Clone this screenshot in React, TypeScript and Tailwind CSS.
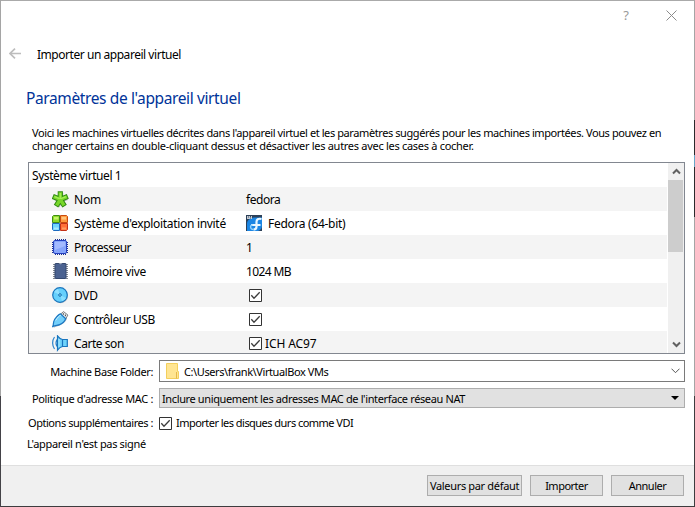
import React from 'react';

const ui = "font-['Noto_Sans','Open_Sans',sans-serif]";

function Icon({ children }: { children: React.ReactNode }) {
  return (
    <svg width="17" height="17" viewBox="0 0 17 17" className="block shrink-0" fill="none">
      {children}
    </svg>
  );
}

function NameIcon() {
  return (
    <Icon>
      <path d="M9 9.500V2M9 9.500L3 7M9 9.500L15 7M9 9.500L5.500 15M9 9.500l3.500 5.500" stroke="#b9b9b9" strokeWidth="4.500" />
      <path d="M8.300 8.500V.3M8.300 8.500L.8 5.400M8.300 8.500L15.800 5.400M8.300 8.500L4 15.200M8.300 8.500l4.300 6.700" stroke="#2f8a10" strokeWidth="5.200" />
      <path d="M8.300 8.500V1.300M8.300 8.500L1.700 5.800M8.300 8.500L14.900 5.800M8.300 8.500L4.600 14.300M8.300 8.500l3.700 5.800" stroke="#78d62a" strokeWidth="3.400" />
      <path d="M8.300 8V2M7.500 7.700L2.500 5.700M9 7.700l5-2" stroke="#a4ee55" strokeWidth="1.300" />
    </Icon>
  );
}

function SystemIcon() {
  return (
    <Icon>
      <path d="M1.500.5h6v7h-7v-6z" fill="#8fdc2a" stroke="#408e12" />
      <path d="M8.500.5h6l1 1v6h-7z" fill="#ff9a40" stroke="#c84b0e" />
      <path d="M.5 8.500h7v7h-6l-1-1z" fill="#6fd6ff" stroke="#1c6bc0" />
      <path d="M8.500 8.500h7v6l-1 1h-6z" fill="#ff7038" stroke="#c43116" />
      <path d="M2 2h4.500v2.500H2z" fill="#c6f56c" />
      <path d="M9.500 2H14v2.500H9.500z" fill="#ffc47b" />
      <path d="M2 12.500h4.500v2H2z" fill="#a9eaff" />
      <path d="M10 12.500h4v2h-4z" fill="#ff9c60" />
    </Icon>
  );
}

function CpuIcon() {
  return (
    <Icon>
      <path d="M3 .8h11M3 15.200h11" stroke="#1c2f8f" strokeWidth="1.600" strokeDasharray="1 1" />
      <path d="M.8 3v11M15.200 3v11" stroke="#1c2f8f" strokeWidth="1.600" strokeDasharray="1 1" />
      <rect x="1.500" y="1.500" width="13" height="13" rx="1.500" fill="#86a5fb" stroke="#2541bf" />
      <path d="M3 3h10v4L3 11z" fill="#a3baff" />
    </Icon>
  );
}

function MemoryIcon() {
  return (
    <Icon>
      <path d="M2 1v15M15 1v15" stroke="#84888f" strokeWidth="2" strokeDasharray="1 1" />
      <rect x="3" y=".5" width="11" height="15" rx=".5" fill="#4b6290" stroke="#34486f" />
      <path d="M6.500 0h4l-2 1.500z" fill="#a4adbf" />
    </Icon>
  );
}

function DiscIcon() {
  return (
    <Icon>
      <circle cx="8.700" cy="8.900" r="7.300" fill="#b8bcc0" />
      <circle cx="8" cy="8" r="7.300" fill="#66d0fc" stroke="#1975bd" strokeWidth="1.200" />
      <path d="M8 8L2.200 5A6.500 6.500 0 0 1 6 2z" fill="#8fe0ff" />
      <path d="M8 8l6 3a6.500 6.500 0 0 1-4 3z" fill="#8adfff" />
      <circle cx="8" cy="8" r="1.300" fill="#8ee2ff" stroke="#176cae" />
    </Icon>
  );
}

function UsbIcon() {
  return (
    <Icon>
      <path d="M1.500 16.300c3-2 6-1.500 9-4 2-1.500 3.500-3 4-5" stroke="#bbbfc3" strokeWidth="1.200" />
      <path d="M8.500 3.200L11.500.6 15.900 4l-2.200 4z" fill="#ececec" stroke="#7d8185" />
      <path d="M11.300 2.200v1.600M13.400 3.600v1.600" stroke="#444" />
      <path d="M.8 15.400c1-1.800 0-4 1.700-6.700C4.500 6 6 3.500 8.500 2.800l5.200 4.900c-1 2.700-3.600 4.900-6 5.900-2 .8-4.700.7-6.900 1.800z" fill="#73cffa" stroke="#1c78c2" strokeWidth="1.200" />
      <path d="M3.700 9.500C5.500 6.500 7 4.700 8.700 4.300" stroke="#c2efff" />
    </Icon>
  );
}

function SoundIcon() {
  return (
    <Icon>
      <path d="M2.500 2C0 5.500 0 10.500 2.500 14M5 4.500c-1.300 2.300-1.300 4.700 0 7" stroke="#2b83cb" strokeWidth="1.200" />
      <path d="M5.500.8c1.500 2 2.500 3.200 5 3.700h4.800v7h-4.800c-2.500.5-3.500 1.700-5 3.700z" fill="#6ed3fb" stroke="#1874bd" strokeWidth="1.200" />
      <path d="M10.500 4.500v7" stroke="#1874bd" strokeWidth="1.200" />
      <path d="M7 4v8" stroke="#b2ecff" />
    </Icon>
  );
}

function FedoraIcon() {
  return (
    <Icon>
      <path d="M0 0h16v16H0z" fill="#2c4058" />
      <path d="M1 15V8.500C1 5 5 2.500 9 2.500h7V10c0 4-2 6-6 6H1z" fill="#1b86e4" />
      <path d="M1 1h5v3H1z" fill="#c6ccd4" />
      <path d="M2 2h1M4 3h1M4 1.500h1" stroke="#35465c" />
      <path d="M15.500 4C12 3.200 10.500 4.500 10.500 7v4.500c0 2-1 3-3 3M5 10h9.500" stroke="#e8f7ff" strokeWidth="2.200" />
      <path d="M7.500 14.500c-3.500 0-4-4.500-1-4.500" stroke="#8fd3ff" strokeWidth="1.400" />
    </Icon>
  );
}

function Check() {
  return (
    <svg width="13" height="13" viewBox="0 0 13 13" className="block shrink-0" fill="none">
      <path d="M.5.5h12v12H.5z" fill="#fff" stroke="#333" />
      <path d="M2.300 6.300L5 9.200l5.700-5.900" stroke="#3c3c3c" strokeWidth="1.300" />
    </svg>
  );
}

const rows: { icon: React.ReactNode; label: React.ReactNode; value: React.ReactNode }[] = [
  {
    icon: <NameIcon />,
    label: <span className="tracking-[-0.2px]">Nom</span>,
    value: <span className="mt-[2px] tracking-[-0.45px]">fedora</span>,
  },
  {
    icon: <SystemIcon />,
    label: <span className="tracking-[-0.31px]">Système d'exploitation invité</span>,
    value: (
      <>
        <FedoraIcon />
        <span className="mt-[2px] ml-[5px] tracking-[-0.3px]">Fedora (64-bit)</span>
      </>
    ),
  },
  {
    icon: <CpuIcon />,
    label: <span className="tracking-[-0.55px]">Processeur</span>,
    value: <span className="mt-[2px]">1</span>,
  },
  {
    icon: <MemoryIcon />,
    label: <span className="tracking-[-0.33px]">Mémoire vive</span>,
    value: <span className="mt-[2px] tracking-[-0.6px]">1024 MB</span>,
  },
  {
    icon: <DiscIcon />,
    label: <span className="tracking-[-0.3px]">DVD</span>,
    value: <div className="ml-[3px]"><Check /></div>,
  },
  {
    icon: <UsbIcon />,
    label: <span className="tracking-[-0.45px]">Contrôleur USB</span>,
    value: <div className="ml-[3px]"><Check /></div>,
  },
  {
    icon: <SoundIcon />,
    label: <span className="tracking-[-0.45px]">Carte son</span>,
    value: (
      <>
        <div className="ml-[3px]"><Check /></div>
        <span className="mt-[2px] ml-[3px] tracking-[-0.1px]">ICH AC97</span>
      </>
    ),
  },
];

function Button({ className, children }: { className: string; children: React.ReactNode }) {
  return (
    <button className={`flex h-[21px] items-center justify-center border border-[#adadad] bg-[#e1e1e1] whitespace-nowrap ${className}`}>
      {children}
    </button>
  );
}

export default function App() {
  return (
    <div className={`flex h-[507px] w-[695px] overflow-hidden bg-white text-[12px] leading-[14px] text-black ${ui}`}>
      <div className="flex w-px shrink-0 flex-col">
        <div className="h-[396px] bg-[#a5a5a5]" />
        <div className="flex-1 bg-[#434247]" />
      </div>
      <div className="flex w-[693px] shrink-0 flex-col border-t border-t-[#aaaaaa] border-b border-b-[#3d3d3f]">
        <header className="flex h-[28px] shrink-0 items-center justify-end pr-[17px] text-[#999]">
          <span className="mr-[37px] text-[13px]">?</span>
          <svg width="11" height="11" viewBox="0 0 11 11" stroke="#8b8b8b"><path d="M.5.5l10 10M10.500.5L.5 10.500" /></svg>
        </header>
        <div className="flex h-[52px] shrink-0 items-center pl-[8px]">
          <svg width="12" height="11" viewBox="0 0 12 11" fill="none" stroke="#bdbdbd" strokeWidth="1.700" className="mb-[4px]"><path d="M12 5.500H1M6 .7L1 5.500l5 4.800" /></svg>
          <span className="ml-[16px] text-[12px] tracking-[-0.46px] whitespace-nowrap">Importer un appareil virtuel</span>
        </div>
        <h1 className="flex h-[34px] shrink-0 items-center pl-[25px] text-[15.5px] tracking-[-0.38px] text-[#003399]">Paramètres de l'appareil virtuel</h1>
        <div className="h-[47px] shrink-0 pt-[11px] pl-[31px] text-[11px] leading-[13px] whitespace-nowrap">
          <div><span className="tracking-[-0.41px]">Voici les machines virtuelles décrites dans l'appareil virtuel et les paramètres suggérés pour les machines importées. Vous pouvez en</span></div>
          <div><span className="tracking-[-0.29px]">changer certains en double-cliquant dessus et désactiver les autres avec les cases à cocher.</span></div>
        </div>
        <div className="ml-[27px] flex h-[192px] w-[657px] shrink-0 overflow-hidden border border-[#828790]">
          <div className="mr-px w-[638px]">
            <div className="flex h-[24px] items-center pt-[2px] pl-[3px] tracking-[-0.42px]">Système virtuel 1</div>
            {rows.map((r, i) => (
              <div key={i} className={`flex h-[24px] items-center whitespace-nowrap ${i % 2 ? 'bg-white' : 'bg-[#f4f4f4]'}`}>
                <div className="flex w-[217px] items-center pl-[23px]">
                  {r.icon}
                  <div className="mt-[2px] ml-[5px]">{r.label}</div>
                </div>
                {r.value}
              </div>
            ))}
          </div>
          <div className="flex w-[16px] flex-col items-center bg-[#f0f0f0]">
            <svg width="15" height="17" viewBox="0 0 15 17" fill="none" stroke="#606060" strokeWidth="2"><path d="M4 10.500L7.500 7l3.500 3.500" /></svg>
            <div className="mr-px h-[72px] w-[15px] bg-[#cdcdcd]" />
            <svg width="15" height="17" viewBox="0 0 15 17" fill="none" stroke="#606060" strokeWidth="2" className="mt-auto"><path d="M4 6.500L7.500 10 11 6.500" /></svg>
          </div>
        </div>
        <div className="mt-[6px] flex h-[22px] shrink-0 items-center text-[11px] whitespace-nowrap">
          <div className="mt-[2px] flex w-[158px] justify-end pr-[6px]"><span className="tracking-[-0.37px]">Machine Base Folder:</span></div>
          <div className="flex h-[22px] w-[526px] items-center border border-[#7a7a7a] pl-[6px]">
            <svg width="13" height="16" viewBox="0 0 13 16"><path d="M.5.5h11v8h1v7H.5z" fill="#ffe592" stroke="#f3cf5d" /><path d="M10.500 9v6.500" stroke="#e5b84a" /></svg>
            <span className="mt-[2px] ml-[5px] tracking-[-0.41px]">C:\Users\frank\VirtualBox VMs</span>
            <svg width="9" height="6" viewBox="0 0 9 6" fill="none" stroke="#555" className="mr-[4px] ml-auto"><path d="M.5.700l4 4 4-4" /></svg>
          </div>
        </div>
        <div className="mt-[6px] flex h-[20px] shrink-0 items-center text-[11px] whitespace-nowrap">
          <div className="mt-[2px] flex w-[158px] justify-end pr-[6px]"><span className="tracking-[-0.35px]">Politique d'adresse MAC :</span></div>
          <div className="flex h-[20px] w-[526px] items-center border border-[#adadad] bg-[#e1e1e1] pl-[2px]">
            <span className="mt-[2px] tracking-[-0.37px]">Inclure uniquement les adresses MAC de l'interface réseau NAT</span>
            <svg width="8" height="4" viewBox="0 0 8 4" className="mr-[5px] ml-auto"><path d="M0 0h8L4 4z" /></svg>
          </div>
        </div>
        <div className="mt-[8px] flex h-[14px] shrink-0 items-center text-[11px] whitespace-nowrap">
          <div className="flex w-[158px] justify-end pr-[6px]"><span className="tracking-[-0.45px]">Options supplémentaires :</span></div>
          <Check />
          <span className="ml-[4px] tracking-[-0.53px]">Importer les disques durs comme VDI</span>
        </div>
        <div className="mt-[7px] flex h-[14px] shrink-0 items-center pl-[26px] text-[11px] whitespace-nowrap"><span className="tracking-[-0.34px]">L'appareil n'est pas signé</span></div>
        <footer className="mt-auto flex h-[41px] shrink-0 justify-end border-t border-[#dfdfdf] bg-[#f0f0f0] pt-[9px] pr-[10px] text-[11px]">
          <Button className="w-[95px]"><span className="tracking-[-0.33px]">Valeurs par défaut</span></Button>
          <Button className="ml-[8px] w-[73px]"><span className="tracking-[-0.5px]">Importer</span></Button>
          <Button className="ml-[8px] w-[73px]"><span className="tracking-[-0.5px]">Annuler</span></Button>
        </footer>
      </div>
      <div className="flex w-px shrink-0 flex-col">
        <div className="h-[120px] bg-[#a5a5a5]" />
        <div className="h-[35px] bg-[#2b2b2d]" />
        <div className="h-[12px] bg-[#67a6c8]" />
        <div className="h-[50px] bg-[#2b2b2d]" />
        <div className="h-[179px] bg-[#a5a5a5]" />
        <div className="flex-1 bg-[#3d3d3f]" />
      </div>
    </div>
  );
}
